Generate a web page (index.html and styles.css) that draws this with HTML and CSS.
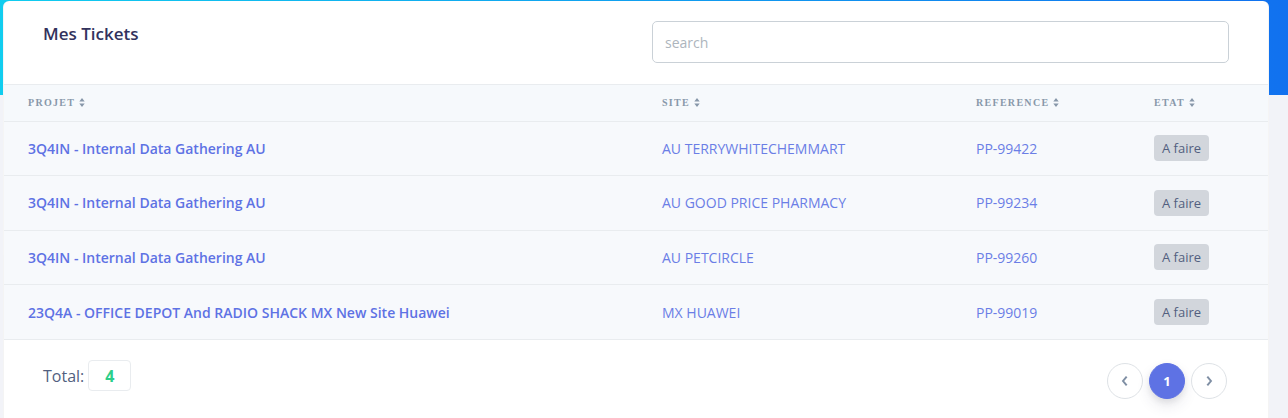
FILE: index.html
```html
<!DOCTYPE html>
<html lang="fr">
<head>
<meta charset="utf-8">
<title>Mes Tickets</title>
<link rel="stylesheet" href="styles.css">
</head>
<body>
<div class="page">
  <div class="card">
    <div class="card-header">
      <h3 class="title">Mes Tickets</h3>
      <input class="search" type="text" placeholder="search">
    </div>
    <table class="tickets">
      <colgroup>
        <col class="c-projet"><col class="c-site"><col class="c-ref"><col class="c-etat">
      </colgroup>
      <thead>
        <tr>
          <th>Projet <svg class="sort" viewBox="0 0 6 10"><path d="M3 0L6 4H0z M3 10L0 6H6z"/></svg></th>
          <th>Site <svg class="sort" viewBox="0 0 6 10"><path d="M3 0L6 4H0z M3 10L0 6H6z"/></svg></th>
          <th>Reference <svg class="sort" viewBox="0 0 6 10"><path d="M3 0L6 4H0z M3 10L0 6H6z"/></svg></th>
          <th>Etat <svg class="sort" viewBox="0 0 6 10"><path d="M3 0L6 4H0z M3 10L0 6H6z"/></svg></th>
        </tr>
      </thead>
      <tbody>
        <tr>
          <td class="projet">3Q4IN - Internal Data Gathering AU</td>
          <td class="site">AU TERRYWHITECHEMMART</td>
          <td class="ref">PP-99422</td>
          <td><span class="badge">A faire</span></td>
        </tr>
        <tr>
          <td class="projet">3Q4IN - Internal Data Gathering AU</td>
          <td class="site">AU GOOD PRICE PHARMACY</td>
          <td class="ref">PP-99234</td>
          <td><span class="badge">A faire</span></td>
        </tr>
        <tr>
          <td class="projet">3Q4IN - Internal Data Gathering AU</td>
          <td class="site">AU PETCIRCLE</td>
          <td class="ref">PP-99260</td>
          <td><span class="badge">A faire</span></td>
        </tr>
        <tr>
          <td class="projet">23Q4A - OFFICE DEPOT And RADIO SHACK MX New Site Huawei</td>
          <td class="site">MX HUAWEI</td>
          <td class="ref">PP-99019</td>
          <td><span class="badge">A faire</span></td>
        </tr>
      </tbody>
    </table>
    <div class="card-footer">
      <div class="total">Total: <span class="total-box">4</span></div>
      <nav class="pager">
        <a class="pg" href="#"><svg viewBox="0 0 10 10"><path d="M6.2 1.8L3.6 5l2.6 3.2"/></svg></a>
        <a class="pg active" href="#">1</a>
        <a class="pg" href="#"><svg viewBox="0 0 10 10"><path d="M3.8 1.8L6.4 5l-2.6 3.2"/></svg></a>
      </nav>
    </div>
  </div>
</div>
</body>
</html>
```

FILE: styles.css
```css
* { box-sizing: border-box; }
html, body { margin: 0; padding: 0; }
body {
  font-family: "Open Sans", "Liberation Sans", sans-serif;
  background-color: #f2f3f8;
  background-image: linear-gradient(87deg, #11cdef 0, #1171ef 100%);
  background-repeat: no-repeat;
  background-size: 100% 95px;
  height: 418px;
  overflow: hidden;
}
.page {
  padding: 1px 19px 0 3px;
}
.card {
  background: #fff;
  border-radius: 6px;
  border: 1px solid rgba(0,0,0,.04);
  border-top: 0;
  overflow: hidden;
}
.card-header {
  display: flex;
  justify-content: space-between;
  align-items: flex-start;
  padding: 20px 39px 21px 39px;
  border-bottom: 1px solid #e9ecef;
}
.title {
  margin: 0;
  font-size: 17px;
  font-weight: 600;
  color: #32325d;
  line-height: 26px;
}
.search {
  width: 577px;
  height: 42px;
  border: 1px solid #cad1d7;
  border-radius: 5px;
  padding: 0 12px;
  font-family: "Open Sans", sans-serif;
  font-size: 14px;
  color: #8898aa;
  outline: none;
}
.search::placeholder { color: #adb5bd; }
.tickets {
  width: 100%;
  border-collapse: collapse;
  table-layout: fixed;
}
.c-projet { width: 634px; }
.c-site { width: 314px; }
.c-ref { width: 178px; }
.tickets th {
  background: #f6f9fc;
  text-align: left;
  font-family: "Liberation Serif", serif;
  font-weight: bold;
  font-size: 10px;
  letter-spacing: 1.3px;
  text-transform: uppercase;
  color: #8898aa;
  height: 36px;
  padding: 0 24px;
  border-bottom: 1px solid #e9ecef;
}
.sort {
  width: 6px;
  height: 9px;
  fill: #8898aa;
  vertical-align: -1px;
}
.tickets td {
  background: #f7f9fc;
  height: 54.5px;
  padding: 0 24px;
  border-top: 1px solid #e9ecef;
  font-size: 14px;
  color: #5e72e4;
  white-space: nowrap;
  vertical-align: middle;
}
.tickets tbody tr:first-child td { border-top: 0; }
.tickets td.projet { font-weight: 600; }
.tickets td.site, .tickets td.ref { color: #6b7ee6; }
.badge {
  display: inline-block;
  background: #d2d6dc;
  color: #525f7f;
  font-size: 13px;
  line-height: 26px;
  padding: 0 8px;
  border-radius: 4px;
}
.card-footer {
  display: flex;
  justify-content: space-between;
  align-items: flex-start;
  padding: 20px 41px 30px 39px;
  border-top: 1px solid #e9ecef;
}
.total {
  font-size: 16px;
  color: #525f7f;
  display: flex;
  align-items: center;
  gap: 4px;
  height: 31px;
}
.total-box {
  display: inline-flex;
  align-items: center;
  justify-content: center;
  width: 43px;
  height: 31px;
  border: 1px solid #e9ecef;
  border-radius: 4px;
  color: #2dce89;
  font-weight: 700;
  font-size: 16px;
}
.pager {
  display: flex;
  gap: 6px;
  margin-top: 3px;
}
.pg {
  width: 36px;
  height: 36px;
  border-radius: 50%;
  border: 1px solid #dee2e6;
  display: flex;
  align-items: center;
  justify-content: center;
  text-decoration: none;
  color: #8898aa;
  font-size: 14px;
  background: #fff;
}
.pg svg {
  width: 14px;
  height: 14px;
  fill: none;
  stroke: #7f8fa4;
  stroke-width: 1.4;
}
.pg.active {
  background: #5e72e4;
  border-color: #5e72e4;
  color: #fff;
  font-weight: 700;
  font-size: 13px;
  box-shadow: 0 7px 14px rgba(50,50,93,.1), 0 3px 6px rgba(0,0,0,.08);
}
```
